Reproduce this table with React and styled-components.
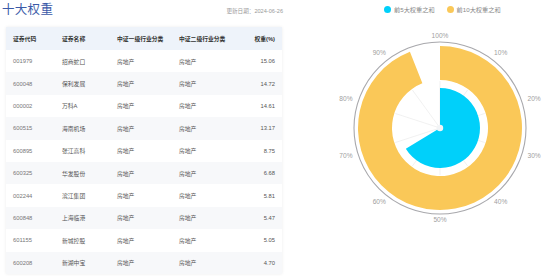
import React from 'react'
import styled, { createGlobalStyle } from 'styled-components'

const GlobalStyle = createGlobalStyle`
  html, body {
    margin: 0;
    padding: 0;
    background: #ffffff;
  }
  body {
    font-family: "Liberation Sans", "Noto Sans CJK SC", sans-serif;
  }
`

const Page = styled.div`
  display: flex;
  width: 550px;
  height: 276px;
  overflow: hidden;
  background: #fff;
`

const LeftPanel = styled.div`
  width: 290px;
  display: flex;
  flex-direction: column;
`

const Header = styled.div`
  display: flex;
  justify-content: space-between;
  align-items: flex-start;
  height: 27px;
  padding: 0 7px 0 2px;
  box-sizing: border-box;
`

const Title = styled.h2`
  margin: 0;
  font-size: 12.5px;
  line-height: 18px;
  font-weight: normal;
  color: #3c5aa8;
  font-family: "Noto Sans CJK SC", sans-serif;
  letter-spacing: 0.3px;
`

const UpdateDate = styled.span`
  font-size: 5.6px;
  line-height: 8px;
  color: #9a9a9a;
  margin-top: 7px;
  font-family: "Liberation Sans", "Noto Sans CJK SC", sans-serif;
`

const TableCard = styled.div`
  margin-left: 6px;
  width: 276px;
  background: #fff;
  box-shadow: 0 0 3px rgba(0, 0, 0, 0.08);
`

const Row = styled.div`
  display: grid;
  grid-template-columns: 49px 55px 62px 1fr auto;
  align-items: center;
  padding: 0 7px;
  height: ${p => (p.$head ? '23px' : '22.4px')};
  background: ${p => (p.$head ? '#eef3fa' : p.$alt ? '#f7f8fa' : '#ffffff')};
  font-size: 5.8px;
  color: ${p => (p.$head ? '#333' : '#555')};
  font-weight: ${p => (p.$head ? 'bold' : 'normal')};
`

const Cell = styled.span`
  white-space: nowrap;
  text-align: ${p => (p.$right ? 'right' : 'left')};
  color: ${p => (p.$muted ? '#777' : 'inherit')};
`

const RightPanel = styled.div`
  flex: 1;
  display: flex;
  flex-direction: column;
`

const Legend = styled.div`
  display: flex;
  align-items: center;
  gap: 12px;
  padding: 3px 0 0 94px;
  height: 12px;
`

const LegendItem = styled.div`
  display: flex;
  align-items: center;
  gap: 3px;
  font-size: 6.2px;
  color: #888;
`

const Dot = styled.span`
  width: 7px;
  height: 7px;
  border-radius: 50%;
  background: ${p => p.$color};
`

const rows = [
  ['001979', '招商蛇口', '房地产', '房地产', '15.06'],
  ['600048', '保利发展', '房地产', '房地产', '14.72'],
  ['000002', '万科A', '房地产', '房地产', '14.61'],
  ['600515', '海南机场', '房地产', '房地产', '13.17'],
  ['600895', '张江高科', '房地产', '房地产', '8.75'],
  ['600325', '华发股份', '房地产', '房地产', '6.68'],
  ['002244', '滨江集团', '房地产', '房地产', '5.81'],
  ['600848', '上海临港', '房地产', '房地产', '5.47'],
  ['601155', '新城控股', '房地产', '房地产', '5.05'],
  ['600208', '新湖中宝', '房地产', '房地产', '4.70'],
]

const cx = 150
const cy = 113

const pt = (r, f) => {
  const a = f * Math.PI * 2
  return [cx + r * Math.sin(a), cy - r * Math.cos(a)]
}

const sector = (r0, r1, f) => {
  const large = f > 0.5 ? 1 : 0
  const [x1, y1] = pt(r1, 0)
  const [x2, y2] = pt(r1, f)
  if (r0 <= 0) {
    return `M${cx},${cy} L${x1},${y1} A${r1},${r1} 0 ${large} 1 ${x2},${y2} Z`
  }
  const [x3, y3] = pt(r0, f)
  const [x4, y4] = pt(r0, 0)
  return `M${x1},${y1} A${r1},${r1} 0 ${large} 1 ${x2},${y2} L${x3},${y3} A${r0},${r0} 0 ${large} 0 ${x4},${y4} Z`
}

const PolarChart = () => {
  const labels = [100, 10, 20, 30, 40, 50, 60, 70, 80, 90]
  return (
    <svg width="260" height="240" viewBox="0 0 260 240">
      {labels.map((l, i) => {
        const [x, y] = pt(47, i / 10)
        return <line key={'s' + l} x1={cx} y1={cy} x2={x} y2={y} stroke="#eeeeee" strokeWidth="0.8" />
      })}
      <path d={sector(48, 82, 0.9402)} fill="#fac858" />
      <path d={sector(0, 40, 0.6631)} fill="#00d0fa" />
      <circle cx={cx} cy={cy} r="3.2" fill="#f2f4f6" />
      <circle cx={cx} cy={cy} r="86" fill="none" stroke="#a8a8ac" strokeWidth="1.1" />
      {labels.map((l, i) => {
        const f = i / 10
        const [x, y] = pt(92, f)
        const anchor = i === 0 || i === 5 ? 'middle' : i < 5 ? 'start' : 'end'
        return (
          <text
            key={l}
            x={x}
            y={y}
            fontSize="6.6"
            fill="#a0a0a0"
            textAnchor={anchor}
            dominantBaseline="middle"
            fontFamily="Liberation Sans, sans-serif"
          >
            {l}%
          </text>
        )
      })}
    </svg>
  )
}

const App = () => {
  return (
    <Page>
      <GlobalStyle />
      <LeftPanel>
        <Header>
          <Title>十大权重</Title>
          <UpdateDate>更新日期：2024-06-26</UpdateDate>
        </Header>
        <TableCard>
          <Row $head>
            <Cell>证券代码</Cell>
            <Cell>证券名称</Cell>
            <Cell>中证一级行业分类</Cell>
            <Cell>中证二级行业分类</Cell>
            <Cell $right>权重(%)</Cell>
          </Row>
          {rows.map((r, i) => (
            <Row key={r[0]} $alt={i % 2 === 1}>
              <Cell $muted>{r[0]}</Cell>
              <Cell>{r[1]}</Cell>
              <Cell>{r[2]}</Cell>
              <Cell>{r[3]}</Cell>
              <Cell $right>{r[4]}</Cell>
            </Row>
          ))}
        </TableCard>
      </LeftPanel>
      <RightPanel>
        <Legend>
          <LegendItem>
            <Dot $color="#00d0fa" />
            前5大权重之和
          </LegendItem>
          <LegendItem>
            <Dot $color="#fac858" />
            前10大权重之和
          </LegendItem>
        </Legend>
        <PolarChart />
      </RightPanel>
    </Page>
  )
}

export default App
